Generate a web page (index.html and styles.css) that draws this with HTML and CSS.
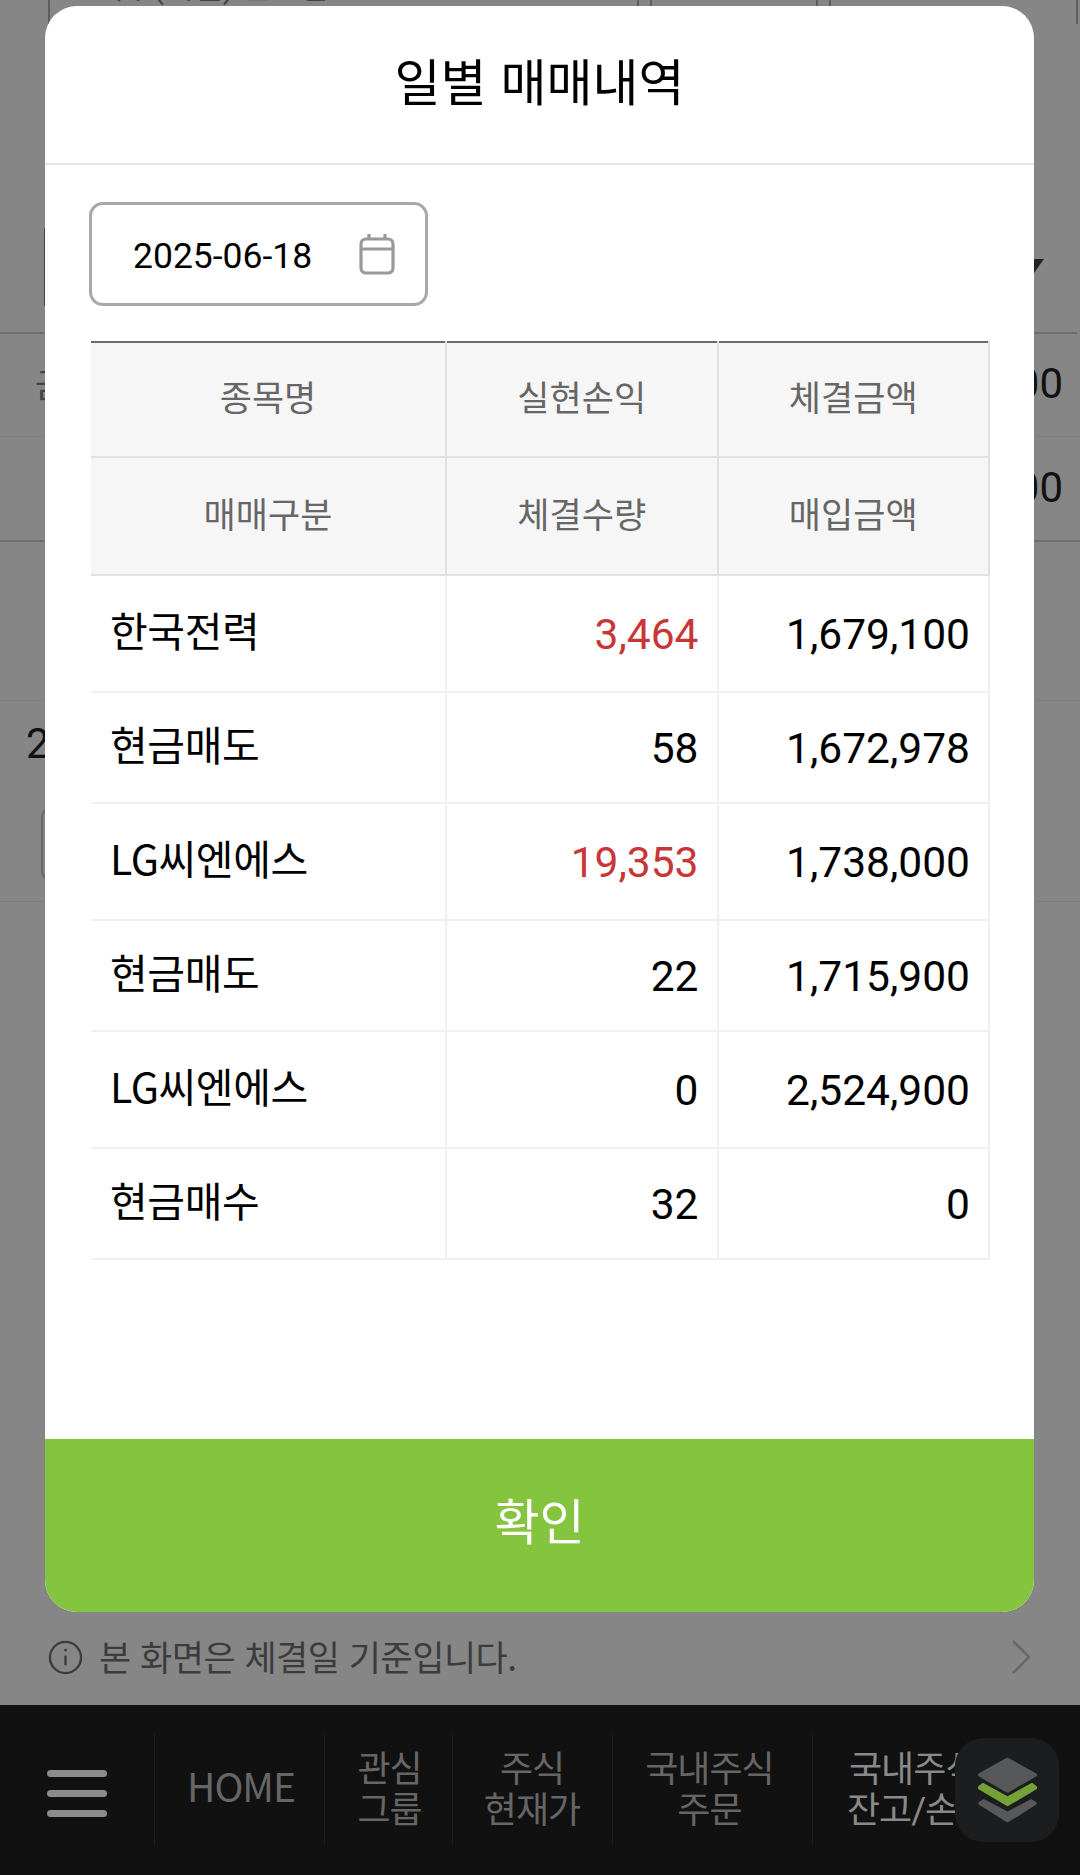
FILE: index.html
```html
<!DOCTYPE html>
<html lang="ko">
<head>
    <meta charset="UTF-8">
    <meta name="viewport" content="width=device-width, initial-scale=1.0">
    <title>일별 매매내역</title>
    <link rel="stylesheet" href="styles.css">
</head>
<body>

    <div class="page">
        <!-- Page behind the dimmed layer -->
        <div class="behind">
            <div class="top-block">
                <div class="top-cells">
                    <div class="top-cell wide">
                        <div class="top-text">매수(체결) 잔고합</div>
                    </div>
                    <div class="top-cell"></div>
                    <div class="top-cell end"></div>
                </div>
                <div class="select-box"><span class="select-arrow"></span></div>
            </div>
            <div class="sum-row"><span class="sum-label">금액</span><span>000</span></div>
            <div class="sum-row tall"><span></span><span>000</span></div>
            <div class="gap-row"></div>
            <div class="date-row">
                <div class="date-text">2</div>
                <div class="date-input"></div>
            </div>
            <div class="info-spacer"></div>
            <div class="info-row">
                <svg class="info-icon" viewBox="0 0 36 36" fill="none" stroke="#3c3c3c" stroke-width="2.4">
                    <circle cx="18" cy="18" r="16"/>
                    <path d="M18 16v10"/>
                    <circle cx="18" cy="10.5" r="1.4" fill="#3c3c3c" stroke="none"/>
                </svg>
                <span class="info-text">본 화면은 체결일 기준입니다.</span>
                <svg class="info-more" viewBox="0 0 20 36" fill="none" stroke="#666" stroke-width="2.4">
                    <path d="M2 2l16 16L2 34"/>
                </svg>
            </div>
        </div>

        <div class="footer">
            <div class="menu-btn">
                <svg viewBox="0 0 60 47" width="60" height="47" fill="#8c8c8c">
                    <rect x="0" y="0" width="60" height="7" rx="3.5"/>
                    <rect x="0" y="20" width="60" height="7" rx="3.5"/>
                    <rect x="0" y="40" width="60" height="7" rx="3.5"/>
                </svg>
            </div>
            <div class="nav-item w-home">HOME</div>
            <div class="nav-item w-group">관심<br>그룹</div>
            <div class="nav-item w-price">주식<br>현재가</div>
            <div class="nav-item w-order">국내주식<br>주문</div>
            <div class="nav-item w-balance active">국내주식<br>잔고/손익</div>
        </div>

        <div class="fab">
            <svg viewBox="0 0 64 70" width="63" height="67" preserveAspectRatio="none">
                <path d="M3 47l5-3 24 13 24-13 5 3c1 1 1 2 0 3L33 68c-1 .5-1 .5-2 0L3 50c-1-1-1-2 0-3z" fill="#57585a"/>
                <path d="M3 30l4-3 25 14 25-14 4 3c1.500 1 1.500 3 0 4L33 51c-1 .5-1 .5-2 0L3 34c-1.500-1-1.500-3 0-4z" fill="#76a136"/>
                <path d="M3 17L31 1c.7-.4 1.300-.4 2 0l28 16c1.300 1 1.300 2.500 0 3.500L33 37c-.7.4-1.300.4-2 0L3 20.500c-1.300-1-1.300-2.500 0-3.500z" fill="#57585a"/>
            </svg>
        </div>

        <!-- Modal -->
        <div class="modal">
            <div class="modal-head">일별 매매내역</div>
            <div class="modal-body">
                <div class="date-field">
                    <span class="date-value">2025-06-18</span>
                    <svg class="cal-icon" viewBox="0 0 36 42" fill="none" stroke="#999" stroke-width="3.200">
                        <rect x="2" y="6" width="32" height="34" rx="5"/>
                        <path d="M2 16h32M10 1v6M26 1v6"/>
                    </svg>
                </div>
                <table class="trade-table">
                    <colgroup>
                        <col class="col-name">
                        <col class="col-num">
                        <col class="col-num">
                    </colgroup>
                    <thead>
                        <tr class="head-a"><th>종목명</th><th>실현손익</th><th>체결금액</th></tr>
                        <tr class="head-b"><th>매매구분</th><th>체결수량</th><th>매입금액</th></tr>
                    </thead>
                    <tbody id="tradeRows"></tbody>
                </table>
            </div>
            <div class="modal-btn">확인</div>
        </div>
    </div>

    <script>
        const trades = [
            { name: "한국전력", profit: "3,464", amount: "1,679,100", type: "현금매도", qty: "58", buy: "1,672,978", up: true },
            { name: "LG씨엔에스", profit: "19,353", amount: "1,738,000", type: "현금매도", qty: "22", buy: "1,715,900", up: true },
            { name: "LG씨엔에스", profit: "0", amount: "2,524,900", type: "현금매수", qty: "32", buy: "0", up: false }
        ];

        const tradeRows = document.getElementById("tradeRows");
        trades.forEach(function (t) {
            tradeRows.innerHTML += `
                <tr class="row-a">
                    <td class="name">${t.name}</td>
                    <td class="num ${t.up ? "up" : ""}">${t.profit}</td>
                    <td class="num">${t.amount}</td>
                </tr>
                <tr class="row-b">
                    <td class="name">${t.type}</td>
                    <td class="num">${t.qty}</td>
                    <td class="num">${t.buy}</td>
                </tr>`;
        });
    </script>
</body>
</html>
```

FILE: styles.css
```css
* {
    box-sizing: border-box;
}

body {
    margin: 0;
    font-family: Roboto, "Noto Sans CJK KR", sans-serif;
    color: #000;
    background-color: #868686;
}

.page {
    position: relative;
    width: 1080px;
    height: 1875px;
    display: flex;
    flex-direction: column;
    overflow: hidden;
}

/* dimmed page */
.behind {
    height: 1705px;
    background-color: #868686;
    display: flex;
    flex-direction: column;
    color: #111;
}

.top-block {
    height: 334px;
    margin-right: 3px;
    border-bottom: 2px solid #6e6e6e;
    position: relative;
}

.top-cells {
    display: flex;
    height: 24px;
    margin-left: 48px;
    margin-right: -1px;
    overflow: hidden;
}

.top-cell {
    width: 168px;
    border-left: 2px solid #5e5e5e;
    border-right: 2px solid #5e5e5e;
    margin-right: 11px;
}

.top-cell.wide {
    width: 591px;
    padding-left: 44px;
}

.top-cell.end {
    flex: 1;
    margin-right: 0;
}

.top-text {
    margin-top: -31px;
    font-size: 32px;
    line-height: 36px;
    color: #444;
    white-space: nowrap;
}

.select-box {
    position: absolute;
    left: 44px;
    right: 33px;
    top: 228px;
    height: 78px;
    border-left: 2px solid #444;
}

.select-arrow {
    position: absolute;
    right: 0;
    top: 31px;
    border-left: 10px solid transparent;
    border-right: 10px solid transparent;
    border-top: 14px solid #222;
}

.sum-row {
    height: 103px;
    border-bottom: 1px solid #7c7c7c;
    padding: 0 17px 0 35px;
    display: flex;
    justify-content: space-between;
    font-size: 42px;
    line-height: 100px;
}

.sum-row.tall {
    height: 105px;
    border-bottom: 2px solid #6e6e6e;
    line-height: 102px;
}

.sum-label {
    font-size: 34px;
    font-family: "Noto Sans CJK KR", sans-serif;
    color: #444;
}

.gap-row {
    height: 159px;
    border-bottom: 1px solid #7c7c7c;
}

.date-row {
    height: 201px;
    border-bottom: 1px solid #7c7c7c;
    padding-left: 26px;
}

.date-text {
    font-size: 42px;
    line-height: 50px;
    margin-top: 18px;
}

.date-input {
    width: 60px;
    height: 74px;
    margin: 38px 0 0 15px;
    border: 2px solid #666;
    border-radius: 10px;
}

.info-spacer {
    flex: 1;
}

.info-row {
    height: 96px;
    padding: 0 14px 0 48px;
    display: flex;
    align-items: center;
    color: #3c3c3c;
    font-family: "Noto Sans CJK KR", sans-serif;
    font-size: 35px;
}

.info-icon {
    width: 35px;
    height: 35px;
    margin-right: 16px;
}

.info-text {
    flex: 1;
    letter-spacing: -0.5px;
    padding-bottom: 4px;
}

.info-more {
    width: 20px;
    height: 36px;
    margin-right: 35px;
}

/* bottom nav */
.footer {
    flex: 1;
    background-color: #111;
    display: flex;
    align-items: center;
    color: #666;
    font-size: 36px;
    line-height: 41px;
    text-align: center;
}

.menu-btn {
    width: 154px;
    padding: 6px 0 0 47px;
    display: flex;
}

.nav-item {
    height: 112px;
    display: flex;
    align-items: center;
    justify-content: center;
    border-left: 1px solid #1d1d1d;
    white-space: nowrap;
    letter-spacing: -1px;
    padding-top: 2px;
}

.w-home {
    width: 170px;
    font-family: "Noto Sans CJK KR", sans-serif;
    font-size: 39px;
    padding: 0 0 10px 3px;
}

.w-group { width: 128px; padding-left: 2px; }
.w-price { width: 160px; padding-right: 1px; }
.w-order { width: 200px; padding-right: 6px; }

.w-balance {
    width: 268px;
    justify-content: flex-start;
    padding-left: 34px;
    text-align: left;
    text-indent: 2px;
}

.active { color: #8a8a8a; }

.fab {
    position: absolute;
    left: 955px;
    top: 1738px;
    width: 104px;
    height: 104px;
    border-radius: 28px;
    background-color: #1c1d1f;
    display: flex;
    align-items: center;
    justify-content: center;
}

/* modal */
.modal {
    position: absolute;
    left: 45px;
    top: 6px;
    width: 989px;
    height: 1606px;
    background-color: #fff;
    border-radius: 32px;
    overflow: hidden;
    display: flex;
    flex-direction: column;
}

.modal-head {
    height: 159px;
    border-bottom: 2px solid #e5e5e5;
    display: flex;
    align-items: center;
    justify-content: center;
    font-size: 50px;
    font-weight: 400;
    font-family: "Noto Sans CJK KR", sans-serif;
    padding-bottom: 12px;
}

.modal-body {
    flex: 1;
    padding: 37px 44px 0 44px;
}

.date-field {
    width: 339px;
    height: 104px;
    border: 3px solid #a8a8a8;
    border-radius: 14px;
    padding: 0 30px 0 41px;
    display: flex;
    align-items: center;
    justify-content: space-between;
    font-size: 35.500px;
}

.date-value {
    padding-top: 3px;
}

.cal-icon {
    width: 36px;
    height: 42px;
}

.trade-table {
    width: 898px;
    margin: 35px 0 0 2px;
    border-collapse: collapse;
    table-layout: fixed;
    border-top: 2px solid #6b6b6b;
}

.col-name { width: 355px; }
.col-num { width: 271.500px; }

.trade-table th {
    background-color: #f6f6f6;
    border: 2px solid #e1e1e1;
    color: #666;
    font-size: 35px;
    font-weight: 400;
    font-family: "Noto Sans CJK KR", sans-serif;
    padding-bottom: 10px;
}

.trade-table thead tr:first-child th {
    border-top: 0;
}

.trade-table th:first-child {
    border-left: 0;
}

.trade-table .head-b th {
    padding-bottom: 8px;
}

.head-a { height: 115px; }
.head-b { height: 118px; }
.row-a { height: 117px; }
.row-b { height: 111px; }

.trade-table td {
    border: 2px solid #f0f0f0;
    padding: 2px 18px 0 19px;
}

.trade-table td:first-child {
    border-left: 0;
}

.trade-table td.name {
    font-family: "Noto Sans CJK KR", sans-serif;
    font-size: 41px;
    letter-spacing: -0.4px;
    padding: 0 19px 10px;
}

.num {
    text-align: right;
    font-size: 42.500px;
}

.up {
    color: #c93636;
}

.modal-btn {
    height: 173px;
    background-color: #84c43e;
    color: #fff;
    font-size: 49px;
    font-family: "Noto Sans CJK KR", sans-serif;
    display: flex;
    align-items: center;
    justify-content: center;
    padding-bottom: 14px;
}
```
